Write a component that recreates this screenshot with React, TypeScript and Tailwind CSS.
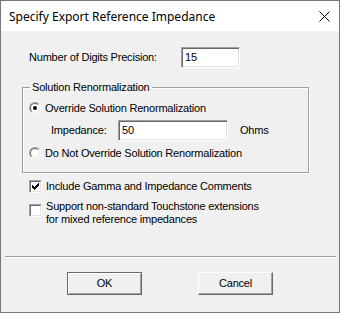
import React from "react";

const FONT = { fontFamily: '"Liberation Sans", Arial, sans-serif' };

function Radio({ checked }: { checked?: boolean }) {
  return (
    <div className="w-[12px] h-[12px] rounded-full border border-t-[#a0a0a0] border-l-[#a0a0a0] border-b-white border-r-white shrink-0">
      <div className="w-full h-full rounded-full border border-t-[#696969] border-l-[#696969] border-b-[#e3e3e3] border-r-[#e3e3e3] bg-white flex items-center justify-center">
        {checked && <div className="w-[4px] h-[4px] rounded-full bg-black" />}
      </div>
    </div>
  );
}

function Checkbox({ checked }: { checked?: boolean }) {
  return (
    <div className="w-[13px] h-[13px] border border-t-[#a0a0a0] border-l-[#a0a0a0] border-b-white border-r-white shrink-0">
      <div className="w-full h-full border border-t-[#696969] border-l-[#696969] border-b-[#e3e3e3] border-r-[#e3e3e3] bg-white flex items-center justify-center">
        {checked && (
          <svg width="7" height="7" viewBox="0 0 7 7" shapeRendering="crispEdges">
            <path d="M0 2h1v3h-1z M1 3h1v3h-1z M2 4h1v3h-1z M3 3h1v3h-1z M4 2h1v3h-1z M5 1h1v3h-1z M6 0h1v3h-1z" fill="#000" />
          </svg>
        )}
      </div>
    </div>
  );
}

function TextBox({ value, w }: { value: string; w: string }) {
  return (
    <div
      className={`${w} h-[21px] border border-t-[#a0a0a0] border-l-[#a0a0a0] border-b-white border-r-white shadow-[inset_1px_1px_0_#696969,inset_-1px_-1px_0_#e3e3e3] bg-white flex items-center pl-[3px] text-[11px] leading-[13px] text-black`}
    >
      {value}
    </div>
  );
}

export default function App() {
  return (
    <div
      className="w-[340px] h-[313px] border border-[#777777] bg-[#f0f0f0] flex flex-col text-black text-[11px] leading-[13px] tracking-[-0.2px]"
      style={FONT}
    >
      {/* Title bar */}
      <div className="h-[30px] bg-white flex items-center justify-between pl-[8px] pr-[9px] shrink-0">
        <span
          className="text-[12px] tracking-normal text-black"
          style={{ fontFamily: '"Noto Sans", "Open Sans", sans-serif' }}
        >
          Specify Export Reference Impedance
        </span>
        <svg width="11" height="11" viewBox="0 0 11 11">
          <path d="M0.5 0.5L10.5 10.5M10.5 0.5L0.5 10.5" stroke="#000" strokeWidth="1" />
        </svg>
      </div>

      {/* Row 1 */}
      <div className="mt-[16px] h-[21px] flex items-center pl-[28px]">
        <span className="w-[152px]">Number of Digits Precision:</span>
        <TextBox value="15" w="w-[59px]" />
      </div>

      {/* Group box */}
      <div className="relative mt-[19px] ml-[21px] w-[287px] h-[86px] border border-[#a0a0a0] shadow-[1px_1px_0_#ffffff,inset_1px_1px_0_#ffffff] flex flex-col pt-[12px] pl-[6px]">
        <span className="absolute left-[7px] top-[-7px] bg-[#f0f0f0] px-[2px]">Solution Renormalization</span>
        <div className="h-[16px] flex items-center">
          <Radio checked />
          <span className="ml-[4px]">Override Solution Renormalization</span>
        </div>
        <div className="mt-[4px] h-[20px] flex items-center pl-[22px]">
          <span className="w-[67px]">Impedance:</span>
          <TextBox value="50" w="w-[110px]" />
          <span className="ml-[12px]">Ohms</span>
        </div>
        <div className="mt-[5px] h-[16px] flex items-center">
          <Radio />
          <span className="ml-[4px]">Do Not Override Solution Renormalization</span>
        </div>
      </div>

      {/* Checkbox 1 */}
      <div className="mt-[6px] h-[14px] flex items-center pl-[28px]">
        <Checkbox checked />
        <span className="ml-[4px]">Include Gamma and Impedance Comments</span>
      </div>

      {/* Checkbox 2 */}
      <div className="mt-[7px] flex items-start pl-[28px]">
        <div className="mt-[4px]">
          <Checkbox />
        </div>
        <span className="ml-[4px]">
          Support non-standard Touchstone extensions
          <br />
          for mixed reference impedances
        </span>
      </div>

      {/* Separator */}
      <div className="mt-[30px] ml-[4px] mr-[3px] h-[2px] border-t border-[#a0a0a0] bg-white shrink-0" />

      {/* Buttons */}
      <div className="mt-[14px] flex pl-[66px] gap-[56px]">
        <button className="w-[75px] h-[23px] border border-[#696969] bg-[#f0f0f0] shadow-[inset_1px_1px_0_#ffffff,inset_-1px_-1px_0_#a0a0a0] text-[11px] leading-[13px]">
          OK
        </button>
        <button className="w-[75px] h-[23px] border border-t-white border-l-white border-b-[#696969] border-r-[#696969] bg-[#f0f0f0] shadow-[inset_-1px_-1px_0_#a0a0a0] text-[11px] leading-[13px]">
          Cancel
        </button>
      </div>
    </div>
  );
}
